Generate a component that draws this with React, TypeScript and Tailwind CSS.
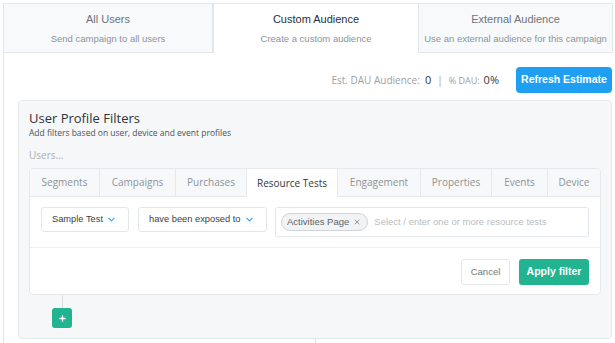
import { ChevronDown, Plus, X } from "lucide-react";

const audienceTabs = [
  { title: "All Users", subtitle: "Send campaign to all users", width: "w-[209px]" },
  { title: "Custom Audience", subtitle: "Create a custom audience", width: "w-[206px]", active: true },
  { title: "External Audience", subtitle: "Use an external audience for this campaign", width: "w-[194px]" },
];

const filterTabs = [
  { label: "Segments", width: "w-[70px]" },
  { label: "Campaigns", width: "w-[76px]" },
  { label: "Purchases", width: "w-[71px]" },
  { label: "Resource Tests", width: "w-[91px]", active: true },
  { label: "Engagement", width: "w-[83px]" },
  { label: "Properties", width: "w-[71px]" },
  { label: "Events", width: "w-[56px]" },
  { label: "Device", width: "flex-1" },
];

function SelectBox({ label, width }: { label: string; width: string }) {
  return (
    <div
      className={`${width} flex h-[25px] items-center justify-between rounded-[3px] border border-[#e3e6ea] bg-white pr-[11px] pl-[10px] font-['Liberation_Sans',Arial,sans-serif] text-[9.3px] whitespace-nowrap text-[#3a3f44]`}
    >
      <span>{label}</span>
      <ChevronDown className="size-[11px] shrink-0 text-[#2d9cf0]" strokeWidth={2.2} aria-hidden="true" />
    </div>
  );
}

export default function App() {
  return (
    <div className="h-[343px] w-[615px] overflow-hidden bg-white pt-[3px] pl-[3px] font-['Open_Sans',sans-serif]">
      <div className="flex h-[400px] flex-col border-l border-[#e3e7ea]">
        <div className="flex h-[50px] font-['Liberation_Sans',Arial,sans-serif]">
          {audienceTabs.map((tab) => (
            <div
              key={tab.title}
              className={`${tab.width} flex flex-col items-center justify-center gap-[7px] border-t border-[#e3e7ea] ${
                tab.active ? "border-x bg-white" : "border-r border-b bg-[#f7f9fa]"
              }`}
            >
              <span
                className={`text-[11px] leading-[13px] font-medium ${tab.active ? "text-[#2b3035]" : "text-[#6d747b]"}`}
              >
                {tab.title}
              </span>
              <span className="text-[9.5px] leading-[11px] text-[#8c949b]">{tab.subtitle}</span>
            </div>
          ))}
        </div>

        <div className="pr-[3px] pl-[14px]">
          <div className="mt-[14px] flex h-[26px] items-center justify-end">
            <div className="mr-[17px] flex items-baseline text-[#9ba1a6]">
              <span className="text-[10px]">Est. DAU Audience:</span>
              <span className="ml-[5px] text-[11px] text-[#33383c]">0</span>
              <span className="mx-[6px] text-[10px]">|</span>
              <span className="text-[9px]">% DAU:</span>
              <span className="ml-[4px] text-[11px] text-[#33383c]">0%</span>
            </div>
            <button className="h-[26px] w-[96px] rounded-[4px] bg-[#1f9ff2] font-['Liberation_Sans',Arial,sans-serif] text-[10.5px] font-bold text-white">
              Refresh Estimate
            </button>
          </div>

          <div className="mt-[7px] rounded-[4px] border border-[#e6e9ec] bg-[#f6f7f9] px-[10px] pt-[8px] pb-[10px]">
            <h2 className="text-[13px] leading-[18px] text-[#2f3438]">User Profile Filters</h2>
            <p className="text-[8.5px] leading-[12px] text-[#4d5357]">
              Add filters based on user, device and event profiles
            </p>
            <p className="mt-[9px] text-[10px] leading-[14px] text-[#a9aeb3]">Users...</p>

            <div className="mt-[6px] overflow-hidden rounded-[4px] border border-[#e6e9ec] bg-white">
              <div className="flex h-[28px] bg-[#f7f8fa]">
                {filterTabs.map((tab) => (
                  <div
                    key={tab.label}
                    className={`${tab.width} flex items-center justify-center border-[#e6e9ec] text-[10px] last:border-r-0 ${
                      tab.active
                        ? "border-r bg-white text-[#33383c]"
                        : "border-r border-b text-[#8d9398]"
                    }`}
                  >
                    {tab.label}
                  </div>
                ))}
              </div>

              <div className="flex items-start gap-[9px] border-b border-[#eceef1] px-[11px] pt-[10px] pb-[10px]">
                <SelectBox label="Sample Test" width="w-[88px]" />
                <SelectBox label="have been exposed to" width="w-[129px]" />
                <div className="ml-[-1px] flex h-[30px] flex-1 items-center rounded-[3px] border border-[#e3e6ea] pl-[5px] font-['Liberation_Sans',Arial,sans-serif] text-[9.5px] whitespace-nowrap">
                  <span className="flex h-[18px] items-center gap-[4px] rounded-full border border-[#cfd4d8] bg-[#f1f3f5] pr-[6px] pl-[5px] text-[#5d6368]">
                    Activities Page
                    <X className="size-[8px]" strokeWidth={2} aria-hidden="true" />
                  </span>
                  <span className="ml-[6px] text-[#b9bec2]">Select / enter one or more resource tests</span>
                </div>
              </div>

              <div className="flex justify-end gap-[9px] px-[11px] pt-[11px] pb-[9px] font-['Liberation_Sans',Arial,sans-serif]">
                <button className="h-[26px] w-[49px] rounded-[3px] border border-[#e3e6ea] bg-white text-[9.5px] text-[#6f757a]">
                  Cancel
                </button>
                <button className="h-[26px] w-[70px] rounded-[3px] bg-[#22b391] text-[10.5px] font-bold text-white">
                  Apply filter
                </button>
              </div>
            </div>

            <div className="ml-[33px] h-[13px] w-px bg-[#d9dde1]" />
            <button className="ml-[23px] flex size-[20px] items-center justify-center rounded-[3px] bg-[#22b391] text-white">
              <Plus className="size-[9px]" strokeWidth={3.5} aria-hidden="true" />
            </button>
          </div>
          <div className="ml-[297px] h-[10px] w-px bg-[#d9dde1]" />
        </div>
      </div>
    </div>
  );
}
